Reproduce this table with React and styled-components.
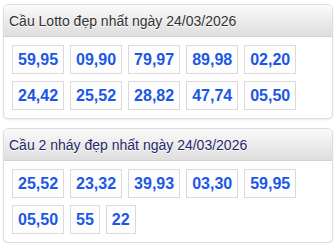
import React from "react";
import styled, { createGlobalStyle } from "styled-components";

const Global = createGlobalStyle`
  html, body { margin: 0; padding: 0; background: #fff; }
  body { font-family: "Liberation Sans", Arial, sans-serif; }
`;

const Page = styled.div`
  padding: 4px 2px 0 3px;
  display: flex;
  flex-direction: column;
  gap: 9px;
`;

const Panel = styled.section`
  border: 1px solid #dcdcdc;
  border-radius: 5px;
  background: #fff;
  box-shadow: 0 1px 2px rgba(0, 0, 0, 0.08);
  overflow: hidden;
`;

const Header = styled.div`
  height: 31px;
  display: flex;
  align-items: center;
  padding: 0 5px;
  background: linear-gradient(to bottom, #fafafa, #dedede);
  border-bottom: 1px solid #d2d2d2;
  font-size: 14px;
  color: ${(p) => p.$color};
  text-shadow: 0 1px 0 #fff;
`;

const Body = styled.div`
  padding: 8px 8px 8px 8px;
  display: flex;
  flex-wrap: wrap;
  column-gap: 6px;
  row-gap: 7px;
`;

const Cell = styled.span`
  display: inline-block;
  border: 1px solid #dadada;
  background: #fdfdfd;
  padding: 0 5px;
  line-height: 27px;
  font-size: 16px;
  font-weight: bold;
  color: #1c58e6;
`;

const panels = [
  {
    title: "Cầu Lotto đẹp nhất ngày 24/03/2026",
    color: "#333333",
    items: ["59,95", "09,90", "79,97", "89,98", "02,20", "24,42", "25,52", "28,82", "47,74", "05,50"],
  },
  {
    title: "Cầu 2 nháy đẹp nhất ngày 24/03/2026",
    color: "#24286a",
    items: ["25,52", "23,32", "39,93", "03,30", "59,95", "05,50", "55", "22"],
  },
];

export default function App() {
  return (
    <>
      <Global />
      <Page>
        {panels.map((p) => (
          <Panel key={p.title}>
            <Header $color={p.color}>{p.title}</Header>
            <Body>
              {p.items.map((it, i) => (
                <Cell key={i}>{it}</Cell>
              ))}
            </Body>
          </Panel>
        ))}
      </Page>
    </>
  );
}
